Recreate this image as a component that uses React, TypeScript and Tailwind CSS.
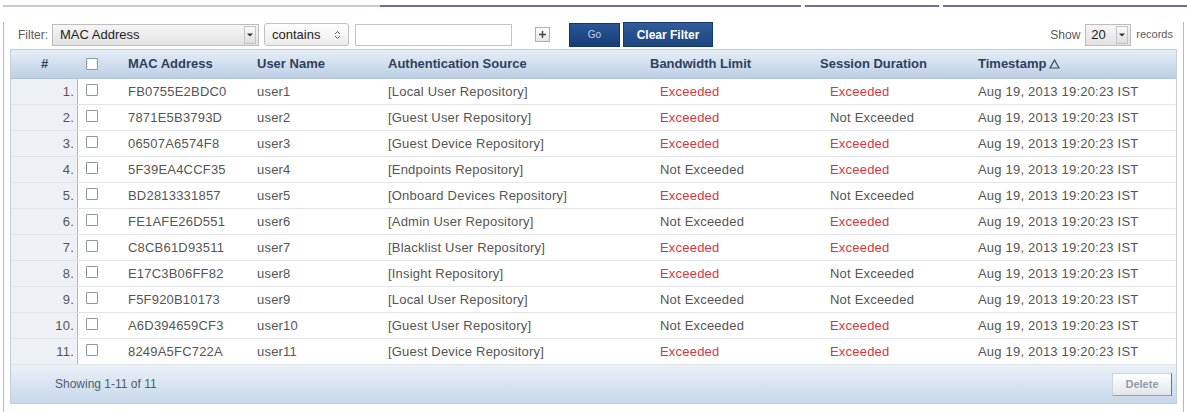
import React from 'react'

interface Row {
  mac: string
  user: string
  source: string
  bandwidth: boolean
  session: boolean
}

const rows: Row[] = [
  { mac: 'FB0755E2BDC0', user: 'user1', source: '[Local User Repository]', bandwidth: true, session: true },
  { mac: '7871E5B3793D', user: 'user2', source: '[Guest User Repository]', bandwidth: true, session: false },
  { mac: '06507A6574F8', user: 'user3', source: '[Guest Device Repository]', bandwidth: true, session: true },
  { mac: '5F39EA4CCF35', user: 'user4', source: '[Endpoints Repository]', bandwidth: false, session: true },
  { mac: 'BD2813331857', user: 'user5', source: '[Onboard Devices Repository]', bandwidth: true, session: false },
  { mac: 'FE1AFE26D551', user: 'user6', source: '[Admin User Repository]', bandwidth: false, session: true },
  { mac: 'C8CB61D93511', user: 'user7', source: '[Blacklist User Repository]', bandwidth: true, session: true },
  { mac: 'E17C3B06FF82', user: 'user8', source: '[Insight Repository]', bandwidth: true, session: false },
  { mac: 'F5F920B10173', user: 'user9', source: '[Local User Repository]', bandwidth: false, session: false },
  { mac: 'A6D394659CF3', user: 'user10', source: '[Guest User Repository]', bandwidth: false, session: true },
  { mac: '8249A5FC722A', user: 'user11', source: '[Guest Device Repository]', bandwidth: true, session: true },
]

const cols = 'grid grid-cols-[67px_50px_129px_131px_262px_170px_158px_1fr]'

function Checkbox() {
  return <span className="block w-[12px] h-[12px] border border-[#8d98a4] bg-white rounded-[1px]" />
}

function DropArrow() {
  return (
    <span className="flex items-center justify-center w-[12px] h-[18px] border border-[#c4c4c4] bg-gradient-to-b from-[#fafafa] to-[#dedede]">
      <svg width="6" height="4" viewBox="0 0 6 4">
        <path d="M0 0.5h6L3 3.5z" fill="#333" />
      </svg>
    </span>
  )
}

function Status({ exceeded }: { exceeded: boolean }) {
  return exceeded ? (
    <span className="text-[#d8363f]">Exceeded</span>
  ) : (
    <span className="text-[#555]">Not Exceeded</span>
  )
}

export default function App() {
  return (
    <div className="w-[1187px] h-[412px] bg-white overflow-hidden font-['Liberation_Sans',Arial,sans-serif] text-[13px]">
      <div className="flex h-[2px] mt-[5px]">
        <div className="w-[3px]" />
        <div className="w-[377px] bg-[#c9cad6]" />
        <div className="w-[421px] bg-[#6f6e8e]" />
        <div className="w-[4px]" />
        <div className="w-[134px] bg-[#6f6e8e]" />
        <div className="w-[4px]" />
        <div className="flex-1 bg-[#6f6e8e]" />
      </div>

      <div className="ml-[3px] w-[1181px] h-[401px] border-x border-b border-[#b8b8c0]">
        {/* filter bar */}
        <div className="flex items-center h-[25px] mt-[15px] pl-[14px] pr-[10px]">
          <span className="text-[12px] text-[#5a5a5a]">Filter:</span>
          <div className="ml-[4px] w-[207px] h-[22px] flex items-center justify-between pl-[7px] pr-[2px] border border-[#bdbdbd] bg-gradient-to-b from-[#f6f6f6] to-[#e2e2e2]">
            <span className="text-[#1e1e1e]">MAC Address</span>
            <DropArrow />
          </div>
          <div className="ml-[5px] w-[85px] h-[23px] flex items-center justify-between px-[7px] border border-[#c2c2c2] rounded-[3px] bg-gradient-to-b from-[#ffffff] to-[#ebebeb]">
            <span className="text-[#222]">contains</span>
            <svg width="7" height="10" viewBox="0 0 7 10">
              <path d="M1 4L3.5 1.5L6 4M1 6L3.5 8.5L6 6" stroke="#555" strokeWidth="1" fill="none" />
            </svg>
          </div>
          <div className="ml-[6px] w-[157px] h-[22px] border border-[#c4c4c4] bg-white" />
          <span className="ml-[23px] w-[15px] h-[15px] flex items-center justify-center border border-[#b0b0b0] bg-gradient-to-b from-white to-[#e6e6e6]">
            <svg width="9" height="9" viewBox="0 0 9 9">
              <path d="M4.5 1v7M1 4.5h7" stroke="#444" strokeWidth="1.4" />
            </svg>
          </span>
          <button className="ml-[19px] w-[51px] h-[24px] bg-gradient-to-b from-[#2a5696] to-[#173d78] text-[10px] text-[#c3d0e4] border border-[#14356a]">
            Go
          </button>
          <button className="ml-[3px] w-[90px] h-[25px] bg-gradient-to-b from-[#2f5c9a] to-[#1d467f] text-[12px] font-bold text-white border border-[#163a70]">
            Clear Filter
          </button>
          <div className="ml-auto flex items-center">
            <span className="text-[12px] text-[#5a5a5a]">Show</span>
            <div className="ml-[5px] w-[46px] h-[22px] flex items-center justify-between pl-[5px] pr-[2px] border border-[#bdbdbd] bg-gradient-to-b from-[#f6f6f6] to-[#e2e2e2]">
              <span className="text-[#1e1e1e]">20</span>
              <DropArrow />
            </div>
            <span className="ml-[5px] text-[11px] text-[#5a5a5a]">records</span>
          </div>
        </div>

        {/* table */}
        <div className="mx-[6px] mt-[2px] border border-[#c5ced8]">
          <div className={`${cols} h-[29px] items-center bg-gradient-to-b from-[#e6eef7] to-[#bccfe5] font-bold text-[#2f415e] border-b border-[#b3c3d6]`}>
            <span className="text-center">#</span>
            <span className="pl-[8px]">
              <Checkbox />
            </span>
            <span>MAC Address</span>
            <span>User Name</span>
            <span>Authentication Source</span>
            <span>Bandwidth Limit</span>
            <span>Session Duration</span>
            <span className="flex items-center gap-[3px]">
              Timestamp
              <svg width="11" height="10" viewBox="0 0 11 10">
                <path d="M5.5 1L10 9H1z" stroke="#3a4a62" strokeWidth="1.2" fill="none" />
              </svg>
            </span>
          </div>

          {rows.map((r, i) => (
            <div key={r.mac} className={`${cols} h-[26px] items-center tracking-[0.2px] text-[#555] border-b border-[#e3e5e8]`}>
              <span className="h-full flex items-center justify-end pr-[3px] bg-[#edf1f5] border-r border-[#aeb8c3] text-[#555]">
                {i + 1}.
              </span>
              <span className="pl-[8px] self-start pt-[5px]">
                <Checkbox />
              </span>
              <span>{r.mac}</span>
              <span>{r.user}</span>
              <span>{r.source}</span>
              <span className="pl-[10px]">
                <Status exceeded={r.bandwidth} />
              </span>
              <span className="pl-[10px]">
                <Status exceeded={r.session} />
              </span>
              <span>Aug 19, 2013 19:20:23 IST</span>
            </div>
          ))}

          <div className="h-[38px] flex items-center justify-between pl-[44px] pr-[4px] bg-gradient-to-b from-[#eaf1f8] to-[#c7d8ea]">
            <span className="text-[12px] text-[#4e5d70]">Showing 1-11 of 11</span>
            <button className="w-[60px] h-[23px] text-[11px] font-bold text-[#8e9cab] bg-gradient-to-b from-white to-[#e3e6ea] border border-[#d0d4d8] border-r-[#6f747a] border-b-[#9aa0a6]">
              Delete
            </button>
          </div>
        </div>
      </div>
    </div>
  )
}
